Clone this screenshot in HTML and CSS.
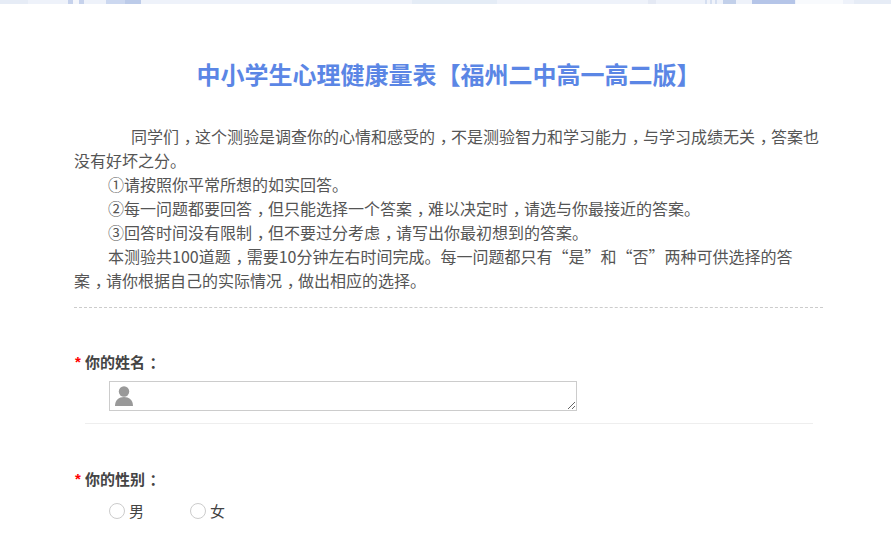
FILE: index.html
```html
<!DOCTYPE html>
<html lang="zh-CN">
<head>
<meta charset="utf-8">
<title>中小学生心理健康量表</title>
<link rel="stylesheet" href="styles.css">
</head>
<body>
<div class="strip">
  <i class="seg s1"></i><i class="seg s2"></i><i class="seg s3"></i><i class="seg s4"></i><i class="seg s5"></i><i class="seg s6"></i><i class="seg s7"></i><i class="seg s8"></i><i class="seg s9"></i><i class="seg s10"></i>
</div>
<main class="page">
  <h1 class="title">中小学生心理健康量表【福州二中高一高二版】</h1>
  <div class="intro">
    <p class="first">同学们<span class="pc">，</span>这个测验是调查你的心情和感受的<span class="pc">，</span>不是测验智力和学习能力<span class="pc">，</span>与学习成绩无关<span class="pc">，</span>答案也<br>没有好坏之分。</p>
    <p class="item">①请按照你平常所想的如实回答。</p>
    <p class="item">②每一问题都要回答<span class="pc">，</span>但只能选择一个答案<span class="pc">，</span>难以决定时<span class="pc">，</span>请选与你最接近的答案。</p>
    <p class="item">③回答时间没有限制<span class="pc">，</span>但不要过分考虑<span class="pc">，</span>请写出你最初想到的答案。</p>
    <p class="item">本测验共100道题<span class="pc">，</span>需要10分钟左右时间完成。每一问题都只有“是”和“否”两种可供选择的答<span class="keep">案<span class="pc">，</span></span>请你根据自己的实际情况<span class="pc">，</span>做出相应的选择。</p>
  </div>
  <section class="question name-q">
    <div class="label"><span class="req">*</span><span>你的姓名<span class="pc">：</span></span></div>
    <div class="field">
      <textarea class="input" aria-label="你的姓名"></textarea>
      <svg class="user" width="18" height="20" viewBox="0 0 18 20"><circle cx="9" cy="5.5" r="5.2" fill="#999"/><path d="M0 20C0 14 4 11 9 11s9 3 9 9z" fill="#999"/></svg>
    </div>
  </section>
  <section class="question">
    <div class="label"><span class="req">*</span><span>你的性别<span class="pc">：</span></span></div>
    <div class="options">
      <label class="opt"><input type="radio" name="sex" class="radio">男</label>
      <label class="opt"><input type="radio" name="sex" class="radio">女</label>
    </div>
  </section>
</main>
</body>
</html>
```
FILE: styles.css
```css
html, body { margin: 0; padding: 0; height: 541px; overflow: hidden; background: #fff; }
body { font-family: "Noto Sans CJK SC", "Liberation Sans", sans-serif; color: #555; }
.strip { height: 4px; background: #eef2fa; display: flex; }
.seg { display: block; height: 4px; flex: none; }
.s1 { width: 28px; background: #e6ecf6; }
.s2 { width: 16px; margin-left: 40px; background: linear-gradient(90deg, #c6d2ec 5px, #f4f6fb 5px, #f4f6fb 11px, #c6d2ec 11px); }
.s3 { width: 35px; margin-left: 22px; background: linear-gradient(90deg, #ccd8f0 19px, #bccbe9 19px); }
.s4 { width: 85px; margin-left: 271px; background: #e4ecf6; }
.s5 { width: 8px; margin-left: 151px; background: #e4e9f4; }
.s6 { width: 12px; margin-left: 49px; background: repeating-linear-gradient(90deg, #d5dff1 0 2px, #f0f3fa 2px 5px); }
.s7 { width: 13px; margin-left: 6px; background: #c2d0ea; }
.s8 { width: 43px; margin-left: 16px; background: #b5c5e8; }
.s9 { width: 47px; margin-left: 1px; background: #f8fafd; }
.s10 { width: 37px; margin-left: 11px; background: #e6ecf6; }
.page { width: 749px; margin: 0 auto; position: relative; left: 3px; }
.title { margin: 0; padding-top: 53px; height: 34px; line-height: 34px; font-size: 24px; font-weight: 700; color: #5b86e5; text-align: center; }
.intro { margin-top: 33px; font-size: 16px; line-height: 24px; color: #555; padding-bottom: 15px; border-bottom: 1px dashed #ccc; }
.intro p { margin: 0; }
.first { text-indent: 57px; }
.item { text-indent: 34px; }
.pc { display: inline-block; box-sizing: border-box; width: 1em; padding-left: .3em; text-indent: 0; font-feature-settings: "halt"; }
.keep { white-space: nowrap; }
.question { padding-top: 43px; font-size: 15px; }
.name-q { margin: 0 10px 0 11px; padding-bottom: 12px; border-bottom: 1px solid #eee; }
.question:not(.name-q) { padding-top: 44px; }
.label { font-weight: 700; color: #444; line-height: 22px; display: flex; align-items: center; }
.name-q .label { margin-left: -11px; }
.req { color: #f00; width: 10px; margin-left: 1px; font-family: "Liberation Sans", sans-serif; font-size: 15px; }
.field { position: relative; margin: 8px 0 0 24px; width: 468px; height: 30px; }
.input { box-sizing: border-box; width: 468px; height: 30px; display: block; margin: 0; padding: 0; border: 1px solid #ccc; background: #fff; resize: both; outline: 0; }
.user { position: absolute; left: 6px; top: 5px; }
.options { display: flex; gap: 46px; margin: 10px 0 0 35px; }
.opt { display: flex; align-items: center; gap: 4px; font-size: 15px; color: #444; line-height: 22px; }
.radio { appearance: none; -webkit-appearance: none; margin: 0; width: 16px; height: 16px; border: 1px solid #ccc; border-radius: 50%; background: #fff; box-sizing: border-box; }
```
